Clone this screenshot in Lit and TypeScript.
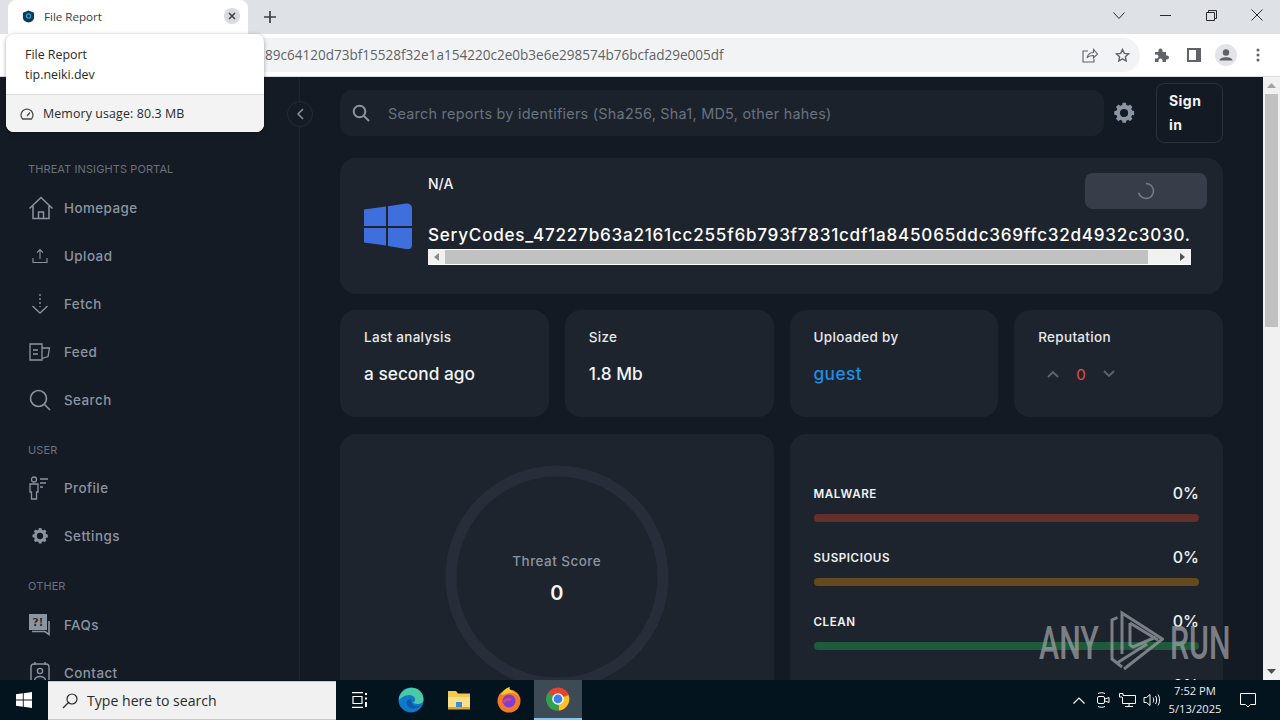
import { LitElement, html, css, svg } from "lit";
import { customElement } from "lit/decorators.js";

const gearPath = "M12 8.2a3.8 3.8 0 1 0 0 7.6 3.8 3.8 0 0 0 0-7.6zm9.3 5.9l-1.9-.3c-.2.6-.4 1.2-.8 1.8l1.2 1.6-2.3 2.3-1.6-1.2c-.5.3-1.1.6-1.8.8l-.3 2h-3.2l-.3-2c-.6-.2-1.2-.4-1.8-.8l-1.6 1.2-2.3-2.3 1.2-1.6c-.3-.5-.6-1.1-.8-1.8l-2-.3v-3.2l2-.3c.2-.6.4-1.2.8-1.8L4.6 6.4l2.3-2.3 1.6 1.2c.5-.3 1.1-.6 1.8-.8l.3-2h3.2l.3 2c.6.2 1.2.4 1.8.8l1.6-1.2 2.3 2.3-1.2 1.6c.3.5.6 1.1.8 1.8l2 .3z";

const navIcons: Record<string, unknown> = {
  home: svg`<svg viewBox="0 0 26 26" width="26" height="26" fill="none" stroke="currentColor" stroke-width="1.5"><path d="M1.5 13.500 13 2.500l11.500 11M5 11v12.500h16V11M10.500 23.500V17h5v6.500"/></svg>`,
  upload: svg`<svg viewBox="0 0 16 16" width="16" height="16" fill="none" stroke="currentColor" stroke-width="1.1"><path d="M8 11V2M5 4.600 8 1.600l3 3M1 10v4.500h14V10"/></svg>`,
  fetch: svg`<svg viewBox="0 0 18 22" width="18" height="22" fill="none" stroke="currentColor" stroke-width="1.3"><path d="M9 1v13" stroke-dasharray="2 2"/><path d="M1.500 13 9 20l7.500-7"/></svg>`,
  feed: svg`<svg viewBox="0 0 22 18" width="22" height="18" fill="none" stroke="currentColor" stroke-width="1.3"><path d="M1 1h12v16H1zM4 7h5M4 11h5M13 5h7.500L19 13.500l-6 2"/></svg>`,
  search: svg`<svg viewBox="0 0 22 22" width="22" height="22" fill="none" stroke="currentColor" stroke-width="1.6"><circle cx="9.500" cy="9.500" r="8"/><path d="m15.500 15.500 5.500 5.500"/></svg>`,
  profile: svg`<svg viewBox="0 0 24 24" width="24" height="24" fill="none" stroke="currentColor" stroke-width="1.3"><circle cx="6" cy="3.500" r="2.500"/><path d="M2 8h8v8H8.500v7h-5v-7H2zM12 3h8M12 7h6M12 11h3"/></svg>`,
  gear: svg`<svg viewBox="0 0 24 24" width="20" height="20" fill="currentColor" fill-rule="evenodd"><path d="${gearPath}"/></svg>`,
  faq: svg`<svg viewBox="0 0 24 24" width="24" height="24"><path d="M1 1h18v16H1z" fill="currentColor"/><path d="M21 8v13.500l-4-3H4" fill="none" stroke="currentColor" stroke-width="1.6"/><text x="10" y="13" text-anchor="middle" font-family="Liberation Serif, serif" font-weight="700" font-size="12" fill="#151b24">?!</text></svg>`,
  contact: svg`<svg viewBox="0 0 20 24" width="20" height="24" fill="none" stroke="currentColor" stroke-width="1.4"><rect x="1" y="3" width="18" height="20" rx="3"/><path d="M5 1v3M15 1v3"/><circle cx="10" cy="10" r="2.600"/><path d="M4.500 20c0-6 11-6 11 0"/></svg>`,
};

@customElement("app-root")
export class AppRoot extends LitElement {
  static styles = css`
    :host { display: block; width: 1280px; height: 720px; overflow: hidden; position: relative; font-family: Inter, "Liberation Sans", sans-serif; }
    .window { display: flex; flex-direction: column; height: 720px; }
    svg { display: block; flex: none; }

    .tabstrip { height: 34px; flex: none; background: #dee1e6; display: flex; align-items: stretch; color: #3c4043; font-family: "Open Sans", sans-serif; font-size: 11.6px; }
    .tab { width: 240px; margin-left: 8px; background: #fff; border-radius: 8px 8px 0 0; display: flex; align-items: center; padding: 0 8px 2px 14px; box-sizing: border-box; gap: 9px; }
    .tab-title { flex: 1; }
    .tab-close { width: 16px; height: 16px; border-radius: 50%; background: #d9dbdf; display: grid; place-items: center; }
    .new-tab { width: 44px; display: grid; place-items: center; }
    .spring { flex: 1; }
    .win-ctl { width: 46px; display: grid; place-items: center; padding-bottom: 4px; box-sizing: border-box; }

    .toolbar { height: 43px; flex: none; box-sizing: border-box; background: #fff; border-bottom: 1px solid #dadce0; display: flex; align-items: center; padding-left: 60px; }
    .omni { width: 1080px; height: 34px; background: #f1f3f4; border-radius: 17px; display: flex; align-items: center; box-sizing: border-box; padding-left: 205px; font-family: "Open Sans", sans-serif; font-size: 13.55px; color: #5f6368; white-space: nowrap; }
    .omni-url { flex: 1; padding-bottom: 1px; }
    .omni-ico { width: 32px; display: grid; place-items: center; color: #5f6368; }
    .omni-end { width: 2px; }
    .tool-ico { width: 32px; display: grid; place-items: center; color: #5f6368; }
    .tools { display: flex; margin-left: 6px; }

    .page { flex: 1; min-height: 0; display: flex; background: #141a23; position: relative; }
    .side { width: 300px; flex: none; box-sizing: border-box; border-right: 1px solid #1e252e; background: #151b24; padding: 85px 0 0 28px; color: #8b95a1; overflow: hidden; }
    .sec { font-size: 11px; line-height: 14px; color: #69727e; letter-spacing: 0.1px; }
    .sec-first { margin-bottom: 8px; }
    .sec-next { margin-top: 19px; margin-bottom: 7px; }
    .sec-last { margin-top: 19px; margin-bottom: 8px; }
    .item { height: 48px; display: flex; align-items: center; font-size: 13.4px; letter-spacing: 0.45px; font-weight: 500; color: #8b95a1; }
    .item-ico { width: 24px; height: 26px; margin-right: 12px; display: grid; place-items: center; }
    .collapse { position: absolute; left: 287px; top: 24px; width: 26px; height: 26px; border-radius: 50%; box-sizing: border-box; border: 1px solid #252c36; background: #151b24; display: grid; place-items: center; }

    .main { flex: 1; min-width: 0; box-sizing: border-box; padding: 6px 40px 0 40px; overflow: hidden; display: flex; flex-direction: column; }
    .head { display: flex; align-items: center; flex: none; height: 60px; margin-bottom: 15px; }
    .search { width: 764px; flex: none; height: 46px; background: #1b222b; border-radius: 12px; display: flex; align-items: center; padding-left: 12px; box-sizing: border-box; gap: 18px; color: #69727e; font-size: 14.4px; letter-spacing: 0.26px; white-space: nowrap; }
    .head-gear { width: 26px; height: 26px; color: #8a96a3; margin-left: 7px; }
    .signin { width: 67px; height: 60px; flex: none; box-sizing: border-box; margin-left: 19px; border: 1px solid #2a313b; border-radius: 8px; padding: 5px 12px; font-size: 14px; font-weight: 700; line-height: 24px; color: #f2f4f6; letter-spacing: 0.45px; }

    .card { background: #1d242d; border-radius: 16px; box-sizing: border-box; }
    .file { height: 136px; flex: none; display: flex; padding: 14px 16px 0 24px; margin-bottom: 16px; position: relative; }
    .win-logo { width: 48px; margin-top: 31px; margin-right: 16px; flex: none; }
    .file-body { flex: 1; min-width: 0; display: flex; flex-direction: column; }
    .file-top { display: flex; height: 50px; justify-content: space-between; }
    .na { font-size: 14px; font-weight: 500; color: #f2f4f6; line-height: 24px; }
    .load { width: 122px; height: 36px; margin-top: 1px; border-radius: 8px; background: #373e49; display: grid; place-items: center; }
    .fname { width: 763px; font-size: 17.1px; line-height: 26px; font-weight: 500; color: #fff; letter-spacing: 0.76px; white-space: nowrap; overflow: hidden; }
    .hscroll { width: 763px; height: 16px; margin-top: 1px; background: #f1f1f1; display: flex; align-items: stretch; box-sizing: border-box; border-top: 1px solid #fff; border-bottom: 1px solid #fff; }
    .h-arrow { width: 17px; display: grid; place-items: center; flex: none; }
    .h-track { flex: 1; display: flex; }
    .h-thumb { width: 703px; background: #c1c1c1; }

    .stats { display: grid; grid-template-columns: repeat(4, 1fr); gap: 16px; flex: none; margin-bottom: 17px; }
    .stat { height: 107px; padding: 16px 24px; }
    .stat-label { font-size: 13.5px; line-height: 22px; color: #e6e9ec; font-weight: 500; letter-spacing: 0.3px; }
    .stat-val { font-size: 17.3px; font-weight: 500; color: #f2f4f6; margin-top: 13px; line-height: 26px; }
    .blue { color: #1f8fe6; letter-spacing: 0.4px; }
    .rep { display: flex; align-items: center; margin-top: 13px; height: 26px; gap: 17px; padding-left: 9px; font-size: 15px; color: #e2504a; }

    .lower { display: grid; grid-template-columns: 1fr 1fr; gap: 16px; flex: 1; min-height: 0; }
    .lower .card { height: 400px; }
    .gauge { position: relative; padding-top: 28px; display: flex; justify-content: center; }
    .gauge-text { position: absolute; left: 0; right: 0; top: 116px; text-align: center; }
    .gauge-label { font-size: 13.5px; line-height: 22px; color: #8b95a1; letter-spacing: 0.45px; font-weight: 500; }
    .gauge-val { font-size: 20px; line-height: 24px; margin-top: 9px; color: #f6f7f9; font-weight: 600; }
    .bars { padding: 48px 24px; }
    .bar-row { height: 64px; }
    .bar-head { display: flex; justify-content: space-between; align-items: center; height: 22px; }
    .bar-name { font-size: 11.6px; font-weight: 600; letter-spacing: 0.55px; color: #f0f2f4; padding-top: 2px; }
    .bar-pct { font-size: 16px; color: #f0f2f4; font-weight: 500; }
    .bar { height: 8px; border-radius: 4px; margin-top: 10px; }
    .b-red { background: #632f2b; }
    .b-yel { background: #65491f; }
    .b-grn { background: #1f5a3c; }
    .b-grey { background: #3a414c; }

    .vscroll { width: 17px; flex: none; background: #f1f1f1; display: flex; flex-direction: column; }
    .v-arrow { height: 17px; display: grid; place-items: center; flex: none; }
    .v-track { flex: 1; }
    .v-thumb { width: 13px; height: 233px; margin-left: 2px; background: #c1c1c1; }

    .taskbar { height: 40px; flex: none; background: #03141f; display: flex; align-items: stretch; color: #fff; }
    .start { width: 48px; display: grid; place-items: center; }
    .tsearch { width: 288px; margin-top: 1px; background: #f1f1f1; border: 1px solid #c8c8c8; border-width: 1px 0; box-sizing: border-box; display: flex; align-items: center; gap: 9px; padding-left: 14px; color: #2b2b2b; font-family: "Open Sans", sans-serif; font-size: 14.1px; white-space: nowrap; }
    .t-ico { width: 48px; display: grid; place-items: center; flex: none; box-sizing: border-box; }
    .m3 { margin-left: 3px; }
    .m2 { margin-left: 2px; }
    .m1 { margin-left: 1px; }
    .t-active { background: #3c4b55; border-bottom: 2px solid #8cc4ea; }
    .tray { display: flex; align-items: center; color: #fff; margin-right: 11px; }
    .tray-ico { width: 24px; display: grid; place-items: center; }
    .clock { width: 64px; font-family: "Open Sans", sans-serif; font-size: 11.2px; line-height: 18px; text-align: center; color: #e8eaec; }
    .notif { width: 42px; display: grid; place-items: center; }

    .popup { position: absolute; left: 6px; top: 34px; width: 258px; height: 98px; border-radius: 8px; background: #fff; box-shadow: 0 1px 4px rgba(0,0,0,0.35); overflow: hidden; font-family: "Open Sans", sans-serif; font-size: 12.4px; color: #28292c; display: flex; flex-direction: column; }
    .pop-top { height: 61px; box-sizing: border-box; padding: 11px 19px 0; line-height: 20px; border-bottom: 1px solid #dadce0; }
    .pop-bot { flex: 1; background: #f3f3f4; display: flex; align-items: center; padding-left: 14px; gap: 9px; letter-spacing: 0.12px; }

    .mark { position: absolute; left: 1039px; top: 610px; width: 192px; height: 62px; opacity: 0.7; color: #a3a6ab; pointer-events: none; display: flex; align-items: center; }
    .mark-t { font-family: Roboto, sans-serif; font-weight: 500; font-size: 46px; line-height: 62px; transform: scaleX(0.66); transform-origin: left center; white-space: nowrap; width: 60px; flex: none; margin-top: 4px; }
    .mark-ico { width: 54px; margin: 0 6px 0 11px; }
  `;

  private navItem(icon: string, label: string) {
    return html`<div class="item"><span class="item-ico">${navIcons[icon]}</span>${label}</div>`;
  }

  private barRow(name: string, cls: string) {
    return html`<div class="bar-row">
      <div class="bar-head"><span class="bar-name">${name}</span><span class="bar-pct">0%</span></div>
      <div class="bar ${cls}"></div>
    </div>`;
  }

  render() {
    return html`
      <div class="window">
        <div class="tabstrip">
          <div class="tab">
            <svg width="13" height="13" viewBox="0 0 14 14"><path d="M7 0.500 13 3v5c0 3-3 5-6 5.500C4 13 1 11 1 8V3z" fill="#0e3a55"/><circle cx="7" cy="6.500" r="3" fill="#2aa5d8"/><circle cx="7" cy="6.500" r="1.500" fill="#0b2233"/></svg>
            <span class="tab-title">File Report</span>
            <span class="tab-close"><svg width="8" height="8" viewBox="0 0 8 8" stroke="#3c4043" stroke-width="1.5"><path d="m1 1 6 6M7 1 1 7"/></svg></span>
          </div>
          <div class="new-tab"><svg width="12" height="12" viewBox="0 0 12 12" stroke="#3c4043" stroke-width="1.7"><path d="M6 0v12M0 6h12"/></svg></div>
          <div class="spring"></div>
          <div class="win-ctl"><svg width="12" height="7" viewBox="0 0 12 7" fill="none" stroke="#2a2a2a"><path d="m.5.5 5.500 6 5.500-6"/></svg></div>
          <div class="win-ctl"><svg width="11" height="1" viewBox="0 0 11 1" stroke="#2a2a2a"><path d="M0 .5h11"/></svg></div>
          <div class="win-ctl"><svg width="11" height="11" viewBox="0 0 11 11" fill="none" stroke="#2a2a2a"><path d="M.5 2.500h8v8h-8zM2.500 2.500v-2h8v8h-2"/></svg></div>
          <div class="win-ctl"><svg width="12" height="12" viewBox="0 0 12 12" stroke="#2a2a2a"><path d="m.5.5 11 11M11.500.5l-11 11"/></svg></div>
        </div>
        <div class="toolbar">
          <div class="omni">
            <span class="omni-url">89c64120d73bf15528f32e1a154220c2e0b3e6e298574b76bcfad29e005df</span>
            <span class="omni-ico"><svg width="16" height="15" viewBox="0 0 16 15" fill="none" stroke="currentColor" stroke-width="1.1"><path d="M6 3H1v11h11v-3M5 10c1-4 4-5.500 6.500-5.500V1.500L15.500 6l-4 4V7.500C9 7.500 6.500 8 5 10z"/></svg></span>
            <span class="omni-ico"><svg width="15" height="15" viewBox="0 0 15 15" fill="none" stroke="currentColor" stroke-width="1.4"><path d="m7.500 1.500 1.800 3.900 4.200.5-3.100 2.900.8 4.200-3.700-2.100-3.700 2.100.8-4.200L1.500 5.900l4.200-.5z"/></svg></span>
            <span class="omni-end"></span>
          </div>
          <div class="tools">
            <span class="tool-ico"><svg width="16" height="16" viewBox="0 0 16 16" fill="currentColor"><path d="M1 5h3.500V3.500a2 2 0 0 1 4 0V5H12v3.500h1a2 2 0 0 1 0 4h-1V15H8.500v-1.500a2 2 0 0 0-4 0V15H1v-3.500h1.500a2 2 0 0 0 0-4H1z"/></svg></span>
            <span class="tool-ico"><svg width="14" height="14" viewBox="0 0 14 14"><path d="M0 0h14v14H0z" fill="currentColor"/><path d="M2 2h7v10H2z" fill="#fff"/></svg></span>
            <span class="tool-ico"><svg width="22" height="22" viewBox="0 0 22 22"><circle cx="11" cy="11" r="11" fill="#e3e4ea"/><circle cx="11" cy="8.500" r="3.200" fill="#5f6368"/><path d="M4.500 16.500c0-4.500 13-4.500 13 0z" fill="#5f6368"/></svg></span>
            <span class="tool-ico"><svg width="4" height="14" viewBox="0 0 4 14" fill="currentColor"><circle cx="2" cy="2" r="1.500"/><circle cx="2" cy="7" r="1.500"/><circle cx="2" cy="12" r="1.500"/></svg></span>
          </div>
        </div>

        <div class="page">
          <nav class="side">
            <div class="sec sec-first">THREAT INSIGHTS PORTAL</div>
            ${this.navItem("home", "Homepage")}
            ${this.navItem("upload", "Upload")}
            ${this.navItem("fetch", "Fetch")}
            ${this.navItem("feed", "Feed")}
            ${this.navItem("search", "Search")}
            <div class="sec sec-next">USER</div>
            ${this.navItem("profile", "Profile")}
            ${this.navItem("gear", "Settings")}
            <div class="sec sec-last">OTHER</div>
            ${this.navItem("faq", "FAQs")}
            ${this.navItem("contact", "Contact")}
          </nav>
          <div class="collapse"><svg width="7" height="12" viewBox="0 0 7 12" fill="none" stroke="#8b95a1" stroke-width="1.5"><path d="M6 1 1 6l5 5"/></svg></div>

          <main class="main">
            <div class="head">
              <div class="search">
                <svg width="18" height="18" viewBox="0 0 18 18" fill="none" stroke="#8b95a1" stroke-width="2"><circle cx="7.500" cy="7.500" r="5.800"/><path d="m12 12 5 5"/></svg>
                Search reports by identifiers (Sha256, Sha1, MD5, other hahes)
              </div>
              <svg class="head-gear" viewBox="0 0 24 24" fill="currentColor" fill-rule="evenodd"><path d="${gearPath}"/></svg>
              <div class="signin">Sign in</div>
            </div>

            <section class="card file">
              <svg class="win-logo" height="48" viewBox="0 0 48 48" fill="#3f6fdc"><path d="M0 6.500 22 3.500V23H0zM24 3.200 42 .5c3-.4 6 1 6 5V23H24zM0 25h22v17.500L0 39.500zM24 25h24v17c0 4-3 4.500-6 4L24 43z"/></svg>
              <div class="file-body">
                <div class="file-top">
                  <span class="na">N/A</span>
                  <div class="load">
                    <svg width="18" height="18" viewBox="0 0 18 18" fill="none" stroke="#767c87" stroke-width="1.6"><path d="M9 1.500a7.500 7.500 0 1 1-7.300 9.200"/></svg>
                  </div>
                </div>
                <div class="fname">SeryCodes_47227b63a2161cc255f6b793f7831cdf1a845065ddc369ffc32d4932c3030.exe</div>
                <div class="hscroll">
                  <span class="h-arrow"><svg width="5" height="8" viewBox="0 0 5 8" fill="#8a8a8a"><path d="M5 0v8L0 4z"/></svg></span>
                  <div class="h-track"><div class="h-thumb"></div></div>
                  <span class="h-arrow"><svg width="5" height="8" viewBox="0 0 5 8" fill="#505050"><path d="M0 0v8l5-4z"/></svg></span>
                </div>
              </div>
            </section>

            <section class="stats">
              <div class="card stat"><div class="stat-label">Last analysis</div><div class="stat-val">a second ago</div></div>
              <div class="card stat"><div class="stat-label">Size</div><div class="stat-val">1.8 Mb</div></div>
              <div class="card stat"><div class="stat-label">Uploaded by</div><div class="stat-val blue">guest</div></div>
              <div class="card stat">
                <div class="stat-label">Reputation</div>
                <div class="rep">
                  <svg width="12" height="8" viewBox="0 0 12 8" fill="none" stroke="#5d6570" stroke-width="1.8"><path d="m1 7 5-5 5 5"/></svg>
                  <span>0</span>
                  <svg width="12" height="8" viewBox="0 0 12 8" fill="none" stroke="#5d6570" stroke-width="1.8"><path d="m1 1 5 5 5-5"/></svg>
                </div>
              </div>
            </section>

            <section class="lower">
              <div class="card gauge">
                <svg width="224" height="224" viewBox="0 0 224 224" fill="none" stroke="#272e39" stroke-width="11"><circle cx="112" cy="115" r="106"/></svg>
                <div class="gauge-text"><div class="gauge-label">Threat Score</div><div class="gauge-val">0</div></div>
              </div>
              <div class="card bars">
                ${this.barRow("MALWARE", "b-red")}
                ${this.barRow("SUSPICIOUS", "b-yel")}
                ${this.barRow("CLEAN", "b-grn")}
                ${this.barRow("UNKNOWN", "b-grey")}
              </div>
            </section>
          </main>

          <div class="vscroll">
            <span class="v-arrow"><svg width="9" height="5" viewBox="0 0 9 5" fill="#a3a3a3"><path d="M0 5h9L4.500 0z"/></svg></span>
            <div class="v-track"><div class="v-thumb"></div></div>
            <span class="v-arrow"><svg width="9" height="5" viewBox="0 0 9 5" fill="#505050"><path d="M0 0h9L4.500 5z"/></svg></span>
          </div>
        </div>

        <div class="taskbar">
          <div class="start"><svg width="16" height="16" viewBox="0 0 16 16" fill="#fff"><path d="M0 2.300 6.800 1.300v6.300H0zM7.700 1.200 16 0v7.600H7.700zM0 8.400h6.800v6.300L0 13.700zM7.700 8.400H16V16l-8.300-1.200z"/></svg></div>
          <div class="tsearch">
            <svg width="16" height="16" viewBox="0 0 16 16" fill="none" stroke="#2b2b2b" stroke-width="1.2"><circle cx="10" cy="6" r="5"/><path d="M6.500 9.500 1 15"/></svg>
            Type here to search
          </div>
          <div class="t-ico"><svg width="16" height="16" viewBox="0 0 16 16" fill="none" stroke="#fff" stroke-width="1.2"><path d="M0 .6h11M0 15.400h11M1 4.500h9v7H1z"/><path d="M14 1v2M14 5.500v2M14 10v5" stroke-width="2"/></svg></div>
          <div class="t-ico m3"><svg width="26" height="26" viewBox="0 0 26 26"><circle cx="13" cy="13" r="12.500" fill="#1278c8"/><path d="M1 11C3 3 11-1 18 1.500c5 2 7.500 6 7.500 11 0 3-2.500 4.500-6 4.500-2.500 0-4-.8-4.500-1.500 1.500-.5 2.500-2 2-4C16 8.500 12 7 8 8.500 5 9.500 2.500 11 1 13z" fill="#49c9a5"/><path d="M8.500 15c0 4 3 6.500 7 6.500 3 0 6-1.500 8-4-2 1.500-4 2-6 1.500-3-.6-5-3-4-7-2.500.3-5 1.300-5 3z" fill="#0c59a4"/></svg></div>
          <div class="t-ico"><svg width="24" height="22" viewBox="0 0 24 22"><path d="M1 2h8l2 2.500h12V20H1z" fill="#f3c94f"/><path d="M1 8h22v12H1z" fill="#fbe08a"/><path d="M9 13h6v7H9z" fill="#3a8fd8"/><path d="M1 18h22v2.500H1z" fill="#d9a52d"/></svg></div>
          <div class="t-ico m2"><svg width="24" height="26" viewBox="0 0 24 26"><circle cx="12" cy="14" r="11.500" fill="#f4792a"/><path d="M4 8c1-3 4-7 9-8-1 2 0 3 2 4 4 2 7 5 8 9C21 7 16 5 12 6 8 7 6 8 4 8z" fill="#fcc72f"/><circle cx="12" cy="14" r="6.500" fill="#7c3fd1"/><path d="M6 14c2-3 6-4 9-2l-2 2c-2-.6-4 0-5 2z" fill="#e23e8b"/></svg></div>
          <div class="t-ico m1 t-active"><svg width="24" height="24" viewBox="0 0 24 24"><circle cx="12" cy="12" r="11.500" fill="#e3452f"/><path d="M12 12 22.500 8A11.500 11.500 0 0 1 13 23.500z" fill="#f7c52b"/><path d="M12 12 13 23.500A11.500 11.500 0 0 1 2 5.800z" fill="#2fa24a"/><circle cx="12" cy="12" r="5.800" fill="#fff"/><circle cx="12" cy="12" r="4.400" fill="#3b7fe8"/></svg></div>
          <div class="spring"></div>
          <div class="tray">
            <span class="tray-ico"><svg width="12" height="7" viewBox="0 0 12 7" fill="none" stroke="#fff" stroke-width="1.2"><path d="m.5 6.500 5.500-5.500 5.500 5.500"/></svg></span>
            <span class="tray-ico"><svg width="14" height="16" viewBox="0 0 14 16" fill="none" stroke="#fff"><rect x="1.500" y="4.500" width="7" height="7" rx="1.500"/><path d="M9 7l4-1.500v5L9 9M2 1.500c2-1 5-1 7 0M2 14.500c2 1 5 1 7 0"/></svg></span>
            <span class="tray-ico"><svg width="17" height="14" viewBox="0 0 17 14" fill="none" stroke="#fff"><path d="M4 2.500V.5H.5v3.500H3M4 2.500h12.500v8h-13V4M10 10.500v3M6 13.500h8"/></svg></span>
            <span class="tray-ico"><svg width="17" height="14" viewBox="0 0 17 14" fill="none" stroke="#fff"><path d="M1 4.500h2.500L7 1.500v11l-3.500-3H1zM10 4.500c1 1.500 1 3.500 0 5M12.500 3c1.500 2.500 1.500 5.500 0 8M15 1.500c2 3 2 8 0 11"/></svg></span>
            <div class="clock">7:52 PM<br />5/13/2025</div>
            <span class="notif"><svg width="16" height="15" viewBox="0 0 16 15" fill="none" stroke="#fff"><path d="M.5.500h15v11h-5L8 14l-2.500-2.500h-5z"/></svg></span>
          </div>
        </div>
      </div>

      <div class="popup">
        <div class="pop-top">File Report<br />tip.neiki.dev</div>
        <div class="pop-bot">
          <svg width="14" height="12" viewBox="0 0 14 12" fill="none" stroke="#4a4c50" stroke-width="1.3"><path d="M2.500 11a6 6 0 1 1 9 0zM7 8l3-3.500"/></svg>
          Memory usage: 80.3 MB
        </div>
      </div>

      <div class="mark">
        <span class="mark-t">ANY</span>
        <svg class="mark-ico" height="62" viewBox="0 0 54 62" fill="none" stroke="currentColor" stroke-width="3"><path d="M7.500 7.500 2 10v39l10 8"/><path d="M12 44V3l40.500 26L14 59"/><path d="M20 13v22l3 2 23-10M20 13l28 17"/><path d="M7 53l30-19"/></svg>
        <span class="mark-t">RUN</span>
      </div>
    `;
  }
}
